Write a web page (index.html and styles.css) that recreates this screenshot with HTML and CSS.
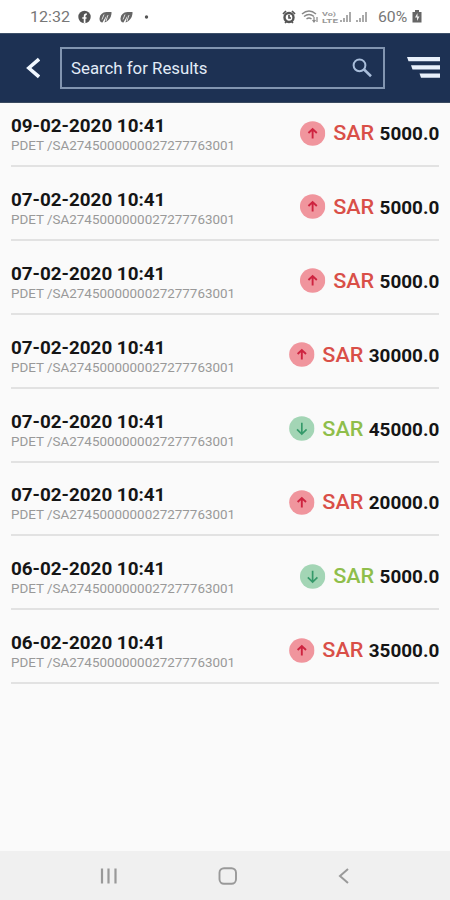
FILE: index.html
```
<!DOCTYPE html>
<html lang="en">
<head>
<meta charset="utf-8">
<title>Transactions</title>
<link rel="stylesheet" href="styles.css">
</head>
<body>
<div class="status">
  <span class="clock">12:32</span>
  <svg class="status-left" width="70" height="14" viewBox="0 0 70 14">
    <circle cx="6.500" cy="7" r="6.200" fill="#555"/>
    <path d="M6.600 13V6.200q0-2 2.200-2M4.300 8h4.200" stroke="#fff" stroke-width="1.700" fill="none"/>
    <g id="leaf"><path d="M21.500 8.500q.5-6 7-6.500h5q.5 5-4 9l-3 1.500 2-7-4 7q-3 0-3-4z" fill="#666"/><path d="M26 4.500l-2 5M30 5l-2 6" stroke="#ddd" stroke-width="1"/></g>
    <use href="#leaf" x="21"/>
    <circle cx="68.500" cy="7" r="1.700" fill="#555"/>
  </svg>
  <svg class="status-right" width="91" height="16" viewBox="0 0 91 16">
    <circle cx="7" cy="8.500" r="4.500" fill="none" stroke="#555" stroke-width="2.400"/>
    <path d="M1 5l3-3M13 5l-3-3M3 14l2-2M11 14l-2-2M7 6v3h2" stroke="#555" stroke-width="1.700" fill="none"/>
    <g fill="none" stroke="#888" stroke-width="1.500"><path d="M20 5q7-6 14 0M22 7.500q5-4 10 0M24.500 10q2.500-2 5 0"/><path d="M32 8v5M30.500 11l1.500 2 1.500-2M35 13V8" stroke-width="1.200"/></g>
    <text x="40" y="6.500" class="volte" textLength="14" lengthAdjust="spacingAndGlyphs">Vo)</text>
    <text x="40" y="14" class="volte" textLength="16" lengthAdjust="spacingAndGlyphs">LTE</text>
    <g fill="#aaa"><path d="M58 13h2v-2h-2zM61 13h2V9h-2zM64 13h2V6h-2zM67 13h2V3h-2zM74 13h2v-2h-2zM77 13h2V9h-2z"/><path d="M80 13h2V6h-2zM83 13h2V3h-2z"/></g>
  </svg>
  <span class="percent">60%</span>
  <svg class="battery" width="10" height="13" viewBox="0 0 10 13"><path d="M3 0h4v2h2.500v10.500H.5V2H3z" fill="#666"/><path d="M5.500 3L3 7.500h2V11l2.500-4.500h-2z" fill="#eee"/></svg>
</div>
<header class="header">
  <svg class="back" width="14" height="22" viewBox="0 0 14 22"><path d="M13 2.200L2.800 11l10.200 8.800" fill="none" stroke="#f0f7ff" stroke-width="3.500"/></svg>
  <div class="search">
    <span class="placeholder">Search for Results</span>
    <svg width="20" height="20" viewBox="0 0 20 20" fill="none" stroke="#a9bedb"><circle cx="7.500" cy="7.300" r="5.900" stroke-width="2"/><path d="M11.800 11.300L19 18.200" stroke-width="2.600"/></svg>
  </div>
  <svg class="menu" width="34" height="22" viewBox="0 0 34 22" fill="#e8f0fb"><path d="M0 0h33v4.200H1.500zM4 8.300h29v4.200H5.500zM12.500 16.600H33v4.200H14z"/></svg>
</header>
<svg class="defs" width="0" height="0">
  <symbol id="up" viewBox="0 0 26 25" preserveAspectRatio="none"><ellipse cx="13" cy="12.500" rx="12.700" ry="12.200" fill="#f0959d"/><path d="M13 17.500V8.500M8.800 12L13 8l4.200 4" fill="none" stroke="#ce2440" stroke-width="1.900"/></symbol>
  <symbol id="down" viewBox="0 0 26 25" preserveAspectRatio="none"><ellipse cx="13" cy="12.500" rx="12.700" ry="12.200" fill="#a3d5b5"/><path d="M13 6.800v11M8.200 13.300l4.800 4.700 4.800-4.700" fill="none" stroke="#35996a" stroke-width="1.700"/></symbol>
</svg>
<main class="list">
  <div class="row first"><div><div class="date">09-02-2020 10:41</div><div class="ref">PDET /SA2745000000027277763001</div></div><div class="sum"><svg class="dir"><use href="#up"/></svg><span class="cur">SAR</span><span class="amount">5000.0</span></div></div>
  <div class="row"><div><div class="date">07-02-2020 10:41</div><div class="ref">PDET /SA2745000000027277763001</div></div><div class="sum"><svg class="dir"><use href="#up"/></svg><span class="cur">SAR</span><span class="amount">5000.0</span></div></div>
  <div class="row"><div><div class="date">07-02-2020 10:41</div><div class="ref">PDET /SA2745000000027277763001</div></div><div class="sum"><svg class="dir"><use href="#up"/></svg><span class="cur">SAR</span><span class="amount">5000.0</span></div></div>
  <div class="row"><div><div class="date">07-02-2020 10:41</div><div class="ref">PDET /SA2745000000027277763001</div></div><div class="sum"><svg class="dir"><use href="#up"/></svg><span class="cur">SAR</span><span class="amount">30000.0</span></div></div>
  <div class="row"><div><div class="date">07-02-2020 10:41</div><div class="ref">PDET /SA2745000000027277763001</div></div><div class="sum"><svg class="dir"><use href="#down"/></svg><span class="cur in">SAR</span><span class="amount">45000.0</span></div></div>
  <div class="row"><div><div class="date">07-02-2020 10:41</div><div class="ref">PDET /SA2745000000027277763001</div></div><div class="sum"><svg class="dir"><use href="#up"/></svg><span class="cur">SAR</span><span class="amount">20000.0</span></div></div>
  <div class="row"><div><div class="date">06-02-2020 10:41</div><div class="ref">PDET /SA2745000000027277763001</div></div><div class="sum"><svg class="dir"><use href="#down"/></svg><span class="cur in">SAR</span><span class="amount">5000.0</span></div></div>
  <div class="row"><div><div class="date">06-02-2020 10:41</div><div class="ref">PDET /SA2745000000027277763001</div></div><div class="sum"><svg class="dir"><use href="#up"/></svg><span class="cur">SAR</span><span class="amount">35000.0</span></div></div>
</main>
<nav class="nav">
  <svg width="18" height="18" viewBox="0 0 18 18"><path d="M2 1.500v15M8.500 1.500v15M15.500 1.500v15" stroke="#999" stroke-width="2.200"/></svg>
  <svg width="20" height="18" viewBox="0 0 20 18"><rect x="1.500" y="1.200" width="16.500" height="15.600" rx="4.500" fill="none" stroke="#999" stroke-width="1.900"/></svg>
  <svg width="12" height="18" viewBox="0 0 12 18"><path d="M10 2L2 9l8 7" fill="none" stroke="#999" stroke-width="2"/></svg>
</nav>
</body>
</html>
```
FILE: styles.css
```
* { box-sizing: border-box; }
body {
  margin: 0;
  width: 450px;
  height: 900px;
  display: flex;
  flex-direction: column;
  overflow: hidden;
  background: #fafafa;
  font-family: Roboto, sans-serif;
}
svg { display: block; flex: none; }
.defs { position: absolute; }
.status {
  height: 33px;
  flex: none;
  display: flex;
  align-items: center;
  padding-left: 30px;
  background: #fff;
  color: #777;
  font-size: 15px;
}
.clock { width: 48px; transform: scaleX(1.07); transform-origin: left; }
.status-left { overflow: visible; }
.status-right { margin-left: 134px; width: 91px; }
.percent { width: 34px; margin-left: 5px; transform: scaleX(1.05); transform-origin: left; }
.volte { font: bold 6px Roboto, sans-serif; fill: #999; }
.header {
  height: 70px;
  flex: none;
  display: flex;
  align-items: center;
  padding-left: 26px;
  background: #1d3153;
  border-top: 1px solid #3d5069;
  border-bottom: 1px solid #3a4a60;
}
.search {
  width: 325px;
  height: 42px;
  margin-left: 20px;
  border: 2px solid #8295b0;
  display: flex;
  align-items: center;
  justify-content: space-between;
  padding: 0 11px 0 9px;
}
.placeholder {
  color: #e2ecf8;
  font-size: 16px;
  transform: scaleX(1.05);
  transform-origin: left;
}
.menu { margin-left: 22px; }
.list { flex: 1; }
.row {
  height: 73.900px;
  margin: 0 11px;
  padding-bottom: 10px;
  border-bottom: 2px solid #e2e2e2;
  display: flex;
  align-items: flex-end;
  justify-content: space-between;
}
.first { height: 64px; }
.date, .ref { transform-origin: left; white-space: nowrap; }
.date {
  font-size: 17.500px;
  line-height: 22px;
  font-weight: 700;
  color: #151515;
  transform: scaleX(1.075);
}
.ref {
  font-size: 12.200px;
  line-height: 18px;
  color: #999;
  transform: scaleX(1.1);
}
.sum {
  height: 26px;
  margin-bottom: 9px;
  display: flex;
  align-items: center;
  transform: scaleX(1.08);
  transform-origin: right;
}
.dir { width: 24px; height: 25px; }
.dir use { width: 24px; height: 25px; }
.cur {
  margin-left: 7px;
  font-size: 20px;
  line-height: 24px;
  font-weight: 500;
  color: #d94f48;
}
.in { color: #8fbe4b; }
.amount {
  margin-left: 5px;
  padding-top: 2px;
  font-size: 17.500px;
  line-height: 22px;
  font-weight: 700;
  color: #151515;
}
.nav {
  height: 49px;
  flex: none;
  background: #f0f0f0;
  display: flex;
  align-items: center;
  justify-content: space-between;
  padding: 0 100px;
}
```
